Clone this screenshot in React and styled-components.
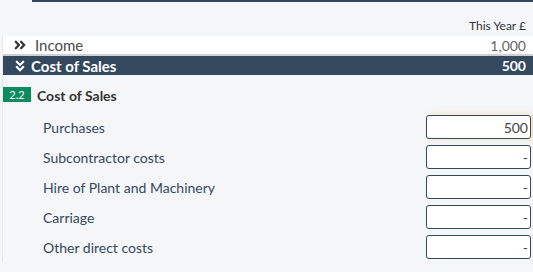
import React from "react";
import styled, { createGlobalStyle } from "styled-components";
import { FaAngleDoubleRight, FaAngleDoubleDown } from "react-icons/fa";

const GlobalStyle = createGlobalStyle`
  body {
    margin: 0;
    background: #f5f6f8;
    font-family: Lato, "Open Sans", sans-serif;
  }
`;

const Page = styled.div`
  width: 533px;
  height: 272px;
  overflow: hidden;
`;

const TopRule = styled.div`
  margin-left: 32px;
  height: 2px;
  background: #34495e;
`;

const ColumnHead = styled.div`
  display: flex;
  justify-content: flex-end;
  padding: 16px 7px 0 0;
  height: 18px;
  font-size: 12px;
  color: #333;
`;

const Panel = styled.div`
  margin-left: 2px;
  border-left: 1px solid #e4e7eb;
`;

const GroupRow = styled.div`
  display: flex;
  align-items: center;
  justify-content: space-between;
  height: ${p => (p.$open ? "19px" : "18px")};
  padding: 0 7px 0 10px;
  background: ${p => (p.$open ? "#34495e" : "#fff")};
  border-bottom: ${p => (p.$open ? "none" : "2px solid #d0d0d0")};
  color: ${p => (p.$open ? "#fff" : "#4a4a4a")};
  font-size: 15px;
  font-weight: ${p => (p.$open ? 700 : 400)};
`;

const GroupTitle = styled.div`
  display: flex;
  align-items: center;
  gap: ${p => (p.$open ? "4px" : "8px")};
  svg {
    font-size: 14px;
    color: ${p => (p.$open ? "#fff" : "#333")};
  }
`;

const Amount = styled.span`
  font-size: 14px;
  color: ${p => (p.$open ? "#fff" : "#666")};
`;

const SectionHead = styled.div`
  display: flex;
  align-items: center;
  gap: 6px;
  margin-top: 11px;
  height: 16px;
`;

const Badge = styled.span`
  display: inline-flex;
  align-items: center;
  justify-content: center;
  width: 28px;
  height: 15px;
  background: #0e8a5f;
  color: #fff;
  font-size: 11px;
`;

const SectionTitle = styled.span`
  font-size: 14px;
  font-weight: 700;
  color: #333;
  padding-top: 2px;
`;

const Items = styled.div`
  margin-top: 10px;
`;

const ItemRow = styled.div`
  display: flex;
  align-items: center;
  justify-content: space-between;
  height: 30px;
  padding: 0 2px 0 40px;
`;

const ItemLabel = styled.span`
  font-size: 14px;
  color: #34495e;
`;

const AmountInput = styled.div`
  box-sizing: border-box;
  width: 105px;
  height: 24px;
  border: 1px solid #34495e;
  border-radius: 3px;
  background: #fff;
  display: flex;
  align-items: center;
  justify-content: flex-end;
  padding-right: 2px;
  font-size: 14px;
  color: #444;
  box-shadow: ${p => (p.$focus ? "4px 0 6px rgba(255, 170, 60, 0.35)" : "none")};
`;

const items = [
  { label: "Purchases", value: "500" },
  { label: "Subcontractor costs", value: "-" },
  { label: "Hire of Plant and Machinery", value: "-" },
  { label: "Carriage", value: "-" },
  { label: "Other direct costs", value: "-" }
];

export default function App() {
  return (
    <Page>
      <GlobalStyle />
      <TopRule />
      <ColumnHead>This Year £</ColumnHead>
      <Panel>
        <GroupRow>
          <GroupTitle>
            <FaAngleDoubleRight />
            Income
          </GroupTitle>
          <Amount>1,000</Amount>
        </GroupRow>
        <GroupRow $open>
          <GroupTitle $open>
            <FaAngleDoubleDown />
            Cost of Sales
          </GroupTitle>
          <Amount $open>500</Amount>
        </GroupRow>
        <SectionHead>
          <Badge>2.2</Badge>
          <SectionTitle>Cost of Sales</SectionTitle>
        </SectionHead>
        <Items>
          {items.map((item, i) => (
            <ItemRow key={item.label}>
              <ItemLabel>{item.label}</ItemLabel>
              <AmountInput $focus={i === 0}>{item.value}</AmountInput>
            </ItemRow>
          ))}
        </Items>
      </Panel>
    </Page>
  );
}
